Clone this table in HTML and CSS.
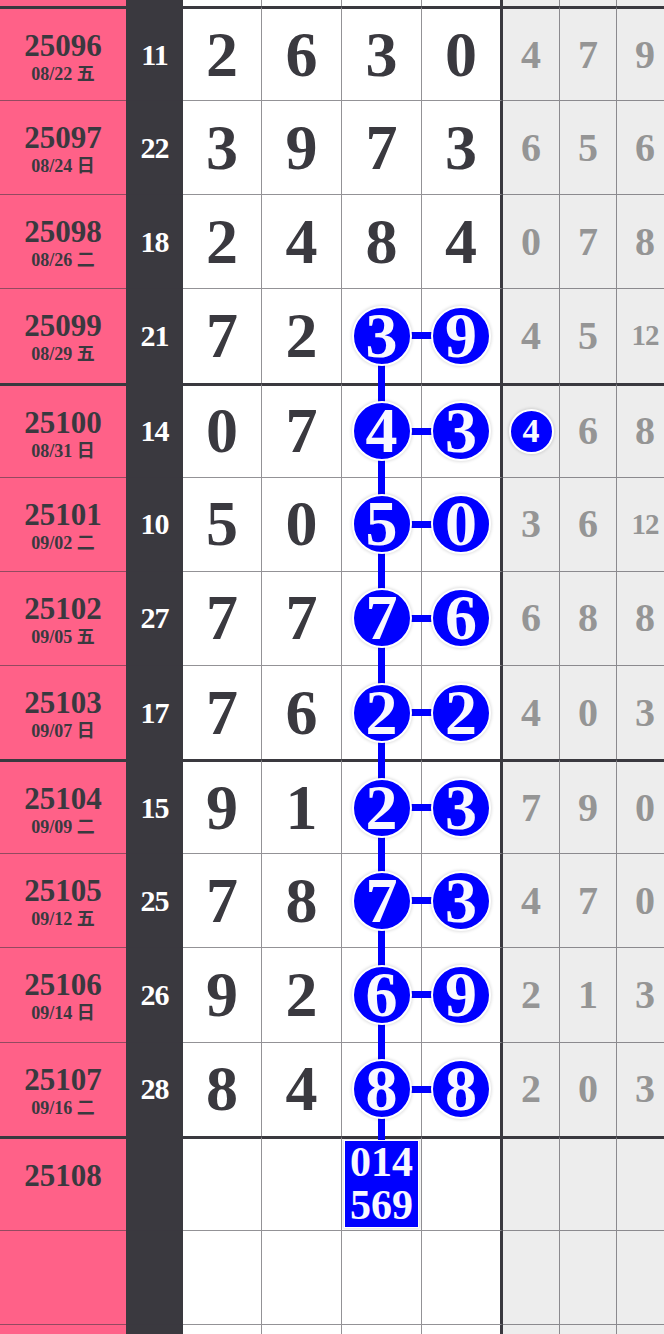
FILE: index.html
```html
<!DOCTYPE html>
<html>

<head>
    <title>Trend chart</title>
    <link rel="stylesheet" href="styles.css">
</head>

<body>
    <div class="chart">
        <div class="row">
            <div class="issue"></div>
            <div class="sum"></div>
            <div class="num"></div>
            <div class="num"></div>
            <div class="num"></div>
            <div class="num last"></div>
            <div class="miss"></div>
            <div class="miss"></div>
            <div class="miss"></div>
        </div>
        <div class="row first">
            <div class="issue"><b>25096</b><small>08/22 五</small></div>
            <div class="sum">11</div>
            <div class="num">2</div>
            <div class="num">6</div>
            <div class="num">3</div>
            <div class="num last">0</div>
            <div class="miss">4</div>
            <div class="miss">7</div>
            <div class="miss">9</div>
        </div>
        <div class="row">
            <div class="issue"><b>25097</b><small>08/24 日</small></div>
            <div class="sum">22</div>
            <div class="num">3</div>
            <div class="num">9</div>
            <div class="num">7</div>
            <div class="num last">3</div>
            <div class="miss">6</div>
            <div class="miss">5</div>
            <div class="miss">6</div>
        </div>
        <div class="row">
            <div class="issue"><b>25098</b><small>08/26 二</small></div>
            <div class="sum">18</div>
            <div class="num">2</div>
            <div class="num">4</div>
            <div class="num">8</div>
            <div class="num last">4</div>
            <div class="miss">0</div>
            <div class="miss">7</div>
            <div class="miss">8</div>
        </div>
        <div class="row">
            <div class="issue"><b>25099</b><small>08/29 五</small></div>
            <div class="sum">21</div>
            <div class="num">7</div>
            <div class="num">2</div>
            <div class="num down"><span class="ball">3</span></div>
            <div class="num last pair"><span class="ball">9</span></div>
            <div class="miss">4</div>
            <div class="miss">5</div>
            <div class="miss wide">12</div>
        </div>
        <div class="row first">
            <div class="issue"><b>25100</b><small>08/31 日</small></div>
            <div class="sum">14</div>
            <div class="num">0</div>
            <div class="num">7</div>
            <div class="num up down"><span class="ball">4</span></div>
            <div class="num last pair"><span class="ball">3</span></div>
            <div class="miss"><span class="dot">4</span></div>
            <div class="miss">6</div>
            <div class="miss">8</div>
        </div>
        <div class="row">
            <div class="issue"><b>25101</b><small>09/02 二</small></div>
            <div class="sum">10</div>
            <div class="num">5</div>
            <div class="num">0</div>
            <div class="num up down"><span class="ball">5</span></div>
            <div class="num last pair"><span class="ball">0</span></div>
            <div class="miss">3</div>
            <div class="miss">6</div>
            <div class="miss wide">12</div>
        </div>
        <div class="row">
            <div class="issue"><b>25102</b><small>09/05 五</small></div>
            <div class="sum">27</div>
            <div class="num">7</div>
            <div class="num">7</div>
            <div class="num up down"><span class="ball">7</span></div>
            <div class="num last pair"><span class="ball">6</span></div>
            <div class="miss">6</div>
            <div class="miss">8</div>
            <div class="miss">8</div>
        </div>
        <div class="row">
            <div class="issue"><b>25103</b><small>09/07 日</small></div>
            <div class="sum">17</div>
            <div class="num">7</div>
            <div class="num">6</div>
            <div class="num up down"><span class="ball">2</span></div>
            <div class="num last pair"><span class="ball">2</span></div>
            <div class="miss">4</div>
            <div class="miss">0</div>
            <div class="miss">3</div>
        </div>
        <div class="row first">
            <div class="issue"><b>25104</b><small>09/09 二</small></div>
            <div class="sum">15</div>
            <div class="num">9</div>
            <div class="num">1</div>
            <div class="num up down"><span class="ball">2</span></div>
            <div class="num last pair"><span class="ball">3</span></div>
            <div class="miss">7</div>
            <div class="miss">9</div>
            <div class="miss">0</div>
        </div>
        <div class="row">
            <div class="issue"><b>25105</b><small>09/12 五</small></div>
            <div class="sum">25</div>
            <div class="num">7</div>
            <div class="num">8</div>
            <div class="num up down"><span class="ball">7</span></div>
            <div class="num last pair"><span class="ball">3</span></div>
            <div class="miss">4</div>
            <div class="miss">7</div>
            <div class="miss">0</div>
        </div>
        <div class="row">
            <div class="issue"><b>25106</b><small>09/14 日</small></div>
            <div class="sum">26</div>
            <div class="num">9</div>
            <div class="num">2</div>
            <div class="num up down"><span class="ball">6</span></div>
            <div class="num last pair"><span class="ball">9</span></div>
            <div class="miss">2</div>
            <div class="miss">1</div>
            <div class="miss">3</div>
        </div>
        <div class="row">
            <div class="issue"><b>25107</b><small>09/16 二</small></div>
            <div class="sum">28</div>
            <div class="num">8</div>
            <div class="num">4</div>
            <div class="num up down"><span class="ball">8</span></div>
            <div class="num last pair"><span class="ball">8</span></div>
            <div class="miss">2</div>
            <div class="miss">0</div>
            <div class="miss">3</div>
        </div>
        <div class="row first">
            <div class="issue"><b>25108</b><small></small></div>
            <div class="sum"></div>
            <div class="num"></div>
            <div class="num"></div>
            <div class="num up"><span class="box">014<br>569</span></div>
            <div class="num last"></div>
            <div class="miss"></div>
            <div class="miss"></div>
            <div class="miss"></div>
        </div>
        <div class="row">
            <div class="issue"></div>
            <div class="sum"></div>
            <div class="num"></div>
            <div class="num"></div>
            <div class="num"></div>
            <div class="num last"></div>
            <div class="miss"></div>
            <div class="miss"></div>
            <div class="miss"></div>
        </div>
        <div class="row">
            <div class="issue"></div>
            <div class="sum"></div>
            <div class="num"></div>
            <div class="num"></div>
            <div class="num"></div>
            <div class="num last"></div>
            <div class="miss"></div>
            <div class="miss"></div>
            <div class="miss"></div>
        </div>
    </div>
</body>

</html>
```

FILE: styles.css
```css
html,
body {
    margin: 0;
    padding: 0;
    overflow: hidden;
    background: #fff;
}

body {
    font-family: "Liberation Serif", "Noto Sans CJK SC", serif;
    font-weight: bold;
    color: #3a393f;
}

.chart {
    width: 674px;
    margin-top: -88.15px; /* first row is cut off by the top edge */
}

.row {
    display: grid;
    grid-template-columns: 126px 57px 79px 80px 80px 81px 57px 57px 57px;
    height: 94.15px;
}

.row > div {
    box-sizing: border-box;
    border-top: 1px solid rgba(58, 57, 63, 0.55);
    display: flex;
    align-items: center;
    justify-content: center;
    position: relative;
    line-height: 1;
}

.row.first > div {
    border-top: 3px solid #3a393f;
}

.issue {
    background: #ff6188;
    flex-direction: column;
    justify-content: flex-start !important;
    padding-top: 22px;
}

.issue b {
    font-size: 31px;
    line-height: 30px;
}

.issue small {
    font-size: 18px;
    line-height: 20px;
    margin-top: 3px;
    min-height: 20px;
}

.sum {
    background: #3a393f;
    color: #fff;
    font-size: 30px;
    letter-spacing: -1px;
}

.num {
    background: #fff;
    font-size: 64px;
    border-right: 1px solid rgba(58, 57, 63, 0.55);
}

.num.last {
    border-right: 3px solid #3a393f;
}

.miss {
    background: #ededed;
    color: #959595;
    font-size: 40px;
    border-right: 1px solid rgba(58, 57, 63, 0.55);
}

.miss.wide {
    font-size: 29px;
    letter-spacing: -1px;
}

.ball,
.dot,
.box {
    background: #0000ff;
    color: #f8f8ff;
    border: 2px solid #fff;
    box-shadow: 0 0 3px 1px rgba(0, 0, 0, 0.12);
    position: relative;
    z-index: 2;
}

.ball,
.dot {
    display: flex;
    align-items: center;
    justify-content: center;
    border-radius: 50%;
}

.ball {
    width: 56px;
    height: 56px;
}

.dot {
    width: 41px;
    height: 41px;
    font-size: 34px;
}

.box {
    width: 73px;
    height: 86px;
    border-width: 1px;
    font-size: 42px;
    line-height: 43px;
    text-align: center;
}

/* connecting lines of the trend */
.up::before,
.down::after,
.pair::before {
    content: "";
    position: absolute;
    background: #0000ff;
    z-index: 1;
}

.up::before {
    left: 50%;
    width: 7px;
    margin-left: -3.5px;
    top: -3px;
    height: calc(50% + 3px);
}

.down::after {
    left: 50%;
    width: 7px;
    margin-left: -3.5px;
    top: 50%;
    bottom: 0;
}

.pair::before {
    left: -14px;
    width: 28px;
    top: 50%;
    height: 7px;
    margin-top: -3.5px;
}
```
